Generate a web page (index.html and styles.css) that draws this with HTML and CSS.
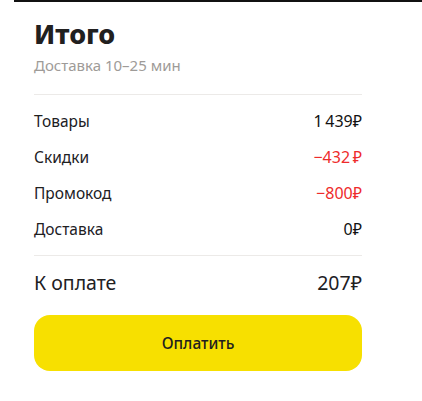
FILE: index.html
```html
<!DOCTYPE html>
<html lang="ru">
<head>
    <meta charset="UTF-8">
    <meta name="viewport" content="width=device-width, initial-scale=1.0">
    <title>Итого</title>
    <link rel="stylesheet" href="styles.css">
</head>
<body>
    <div class="top-line"></div>
    <div class="summary">
        <h1 class="summary-title">Итого</h1>
        <div class="summary-subtitle">Доставка 10–25 мин</div>

        <div class="summary-list">
            <div class="summary-row">
                <span>Товары</span>
                <span class="value">1&#8239;439₽</span>
            </div>
            <div class="summary-row">
                <span>Скидки</span>
                <span class="value minus">−432&#8239;₽</span>
            </div>
            <div class="summary-row">
                <span>Промокод</span>
                <span class="value minus">−800₽</span>
            </div>
            <div class="summary-row">
                <span>Доставка</span>
                <span class="value">0₽</span>
            </div>
        </div>

        <div class="summary-total">
            <span>К оплате</span>
            <span>207₽</span>
        </div>

        <button class="pay-button" type="button">Оплатить</button>
    </div>
</body>
</html>
```

FILE: styles.css
```css
body {
    margin: 0;
    padding: 0;
    background: #fff;
    font-family: "Noto Sans", Arial, sans-serif;
    color: #21201f;
}

.top-line {
    height: 2px;
    margin-left: 14px;
    background: #111;
}

.summary {
    width: 328px;
    padding: 15px 34px 0;
}

.summary-title {
    margin: 0;
    font-size: 27px;
    line-height: 34px;
    font-weight: 800;
}

.summary-subtitle {
    margin-top: 4px;
    font-size: 15px;
    line-height: 20px;
    color: #9e9b98;
}

.summary-list {
    margin-top: 19px;
    padding: 8px 0;
    border-top: 1px solid #eceae8;
    border-bottom: 1px solid #eceae8;
}

.summary-row {
    display: flex;
    justify-content: space-between;
    align-items: center;
    height: 36px;
    font-size: 15.5px;
}

.value {
    font-size: 16px;
    color: #111;
}

.value.minus {
    color: #ee2b2b;
}

.summary-total {
    display: flex;
    justify-content: space-between;
    align-items: center;
    height: 52px;
    font-size: 19.5px;
}

.pay-button {
    display: block;
    width: 100%;
    height: 56px;
    margin-top: 7px;
    border: none;
    border-radius: 16px;
    background: #f7e000;
    font-family: inherit;
    font-size: 15.5px;
    font-weight: 500;
    color: #21201f;
    cursor: pointer;
}
```
